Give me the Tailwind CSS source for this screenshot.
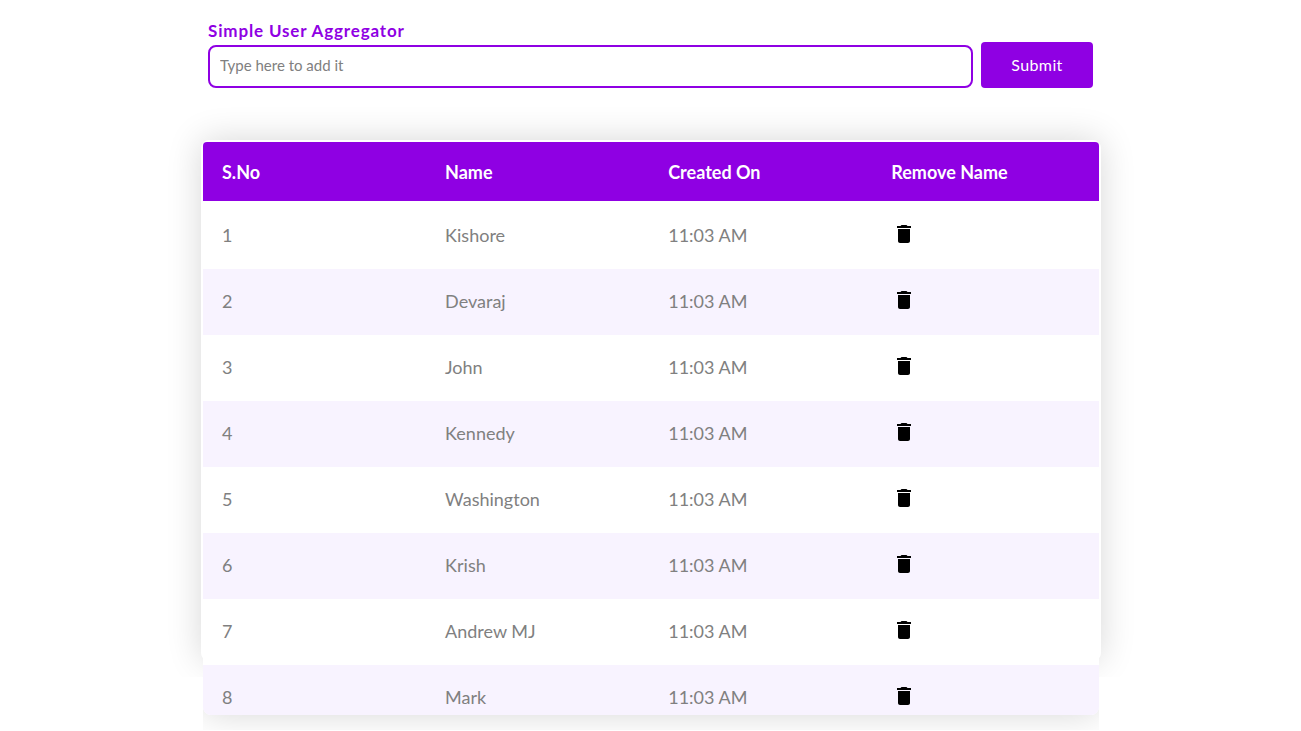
<!DOCTYPE html>
<html lang="en">
<head>
<meta charset="utf-8">
<meta name="viewport" content="width=device-width, initial-scale=1">
<title>Simple User Aggregator</title>
<script src="https://cdn.jsdelivr.net/npm/@tailwindcss/browser@4"></script>
</head>
<body class="bg-white font-['Lato',sans-serif] text-[#808080]">
<svg class="hidden" aria-hidden="true">
  <symbol id="trash" viewBox="0 0 24 24"><path d="M6 19c0 1.100.9 2 2 2h8c1.100 0 2-.9 2-2V7H6v12zM19 4h-3.500l-1-1h-5l-1 1H5v2h14V4z"/></symbol>
</svg>
<main class="mx-auto max-w-[901px] pt-5 pb-4 pl-px">
  <form class="flex items-end gap-2 pr-2 pl-[7px]">
    <div class="flex min-w-0 flex-1 flex-col">
      <label for="user" class="h-[25px] text-[17px] leading-[22px] font-bold tracking-wider text-[#8f00e3]">Simple User Aggregator</label>
      <input id="user" type="text" placeholder="Type here to add it" class="h-[43px] w-full rounded-lg border-2 border-[#8f00e3] px-[10px] pb-1 text-[15px] outline-none placeholder:text-[#808080]">
    </div>
    <button type="submit" class="h-[46px] w-28 shrink-0 rounded bg-[#8f00e3] text-base tracking-wide text-white">Submit</button>
  </form>

  <section class="relative mt-[52px] px-[2px] pt-[2px]">
    <div class="absolute inset-x-0 top-0 bottom-[54px] rounded-lg bg-white shadow-[0_0_35px_rgba(0,0,0,0.16)] [clip-path:inset(-60px_-60px_-16px_-60px)]"></div>
    <div class="relative [clip-path:inset(0_0_-15px_0)]">
      <div class="h-[573px] overflow-hidden rounded-t rounded-b-lg bg-white shadow-[0_0_35px_rgba(0,0,0,0.16)]">
        <table class="w-full table-fixed border-separate border-spacing-0 text-left text-lg">
          <thead class="bg-[#8f00e3] text-white">
            <tr>
              <th scope="col" class="h-[61px] w-[24.9%] border-b-2 border-white pl-[19px] font-bold">S.No</th>
              <th scope="col" class="h-[61px] w-[24.9%] border-b-2 border-white pl-[19px] font-bold">Name</th>
              <th scope="col" class="h-[61px] w-[24.9%] border-b-2 border-white pl-[19px] font-bold">Created On</th>
              <th scope="col" class="h-[61px] border-b-2 border-white pl-[19px] font-bold">Remove Name</th>
            </tr>
          </thead>
          <tbody id="rows"></tbody>
        </table>
      </div>
    </div>
  </section>
</main>
<script>
  const users = ["Kishore", "Devaraj", "John", "Kennedy", "Washington", "Krish", "Andrew MJ", "Mark"];
  document.getElementById("rows").innerHTML = users.map((name, i) => `
    <tr class="h-[66px] even:bg-[#f8f3ff]">
      <td class="pb-[3px] pl-[19px]">${i + 1}</td>
      <td class="pb-[3px] pl-[19px]">${name}</td>
      <td class="pb-[3px] pl-[19px]">11:03 AM</td>
      <td class="pb-1 pl-5"><button type="button" aria-label="Remove ${name}" class="block size-6 text-black"><svg class="size-6 fill-current"><use href="#trash"/></svg></button></td>
    </tr>`).join("");
</script>
</body>
</html>
